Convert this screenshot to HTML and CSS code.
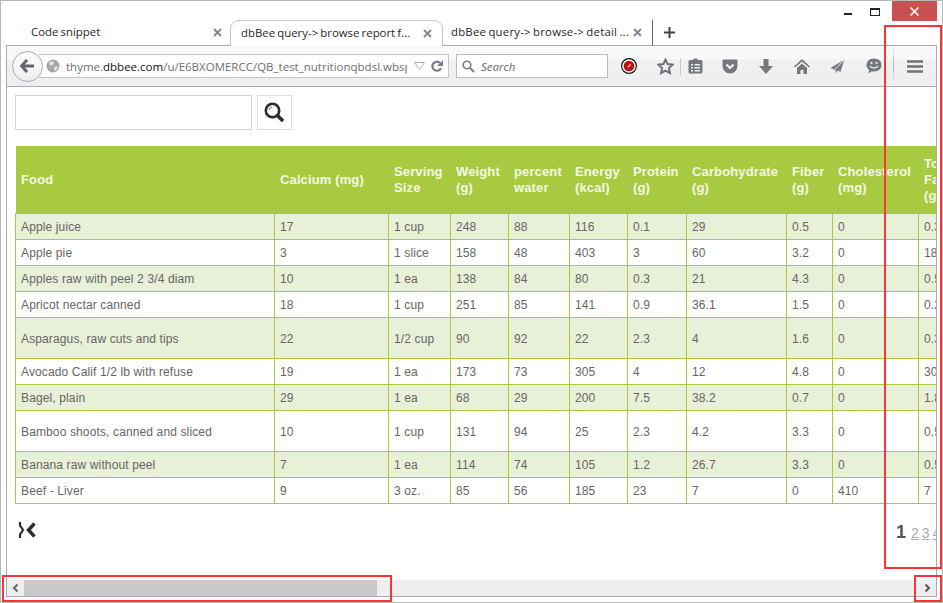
FILE: index.html
```html
<!DOCTYPE html>
<html lang="en">
<head>
<meta charset="utf-8">
<title>dbBee query</title>
<link rel="stylesheet" href="styles.css">
</head>
<body>
<div class="window">
  <div class="caption">
    <span class="cap-min"></span>
    <span class="cap-max"></span>
    <span class="cap-close"><svg width="11" height="11" viewBox="0 0 11 11"><path d="M1.5 1.5l8 8M9.5 1.5l-8 8" stroke="#fff" stroke-width="1.6" fill="none"/></svg></span>
  </div>
  <div class="tabs">
    <div class="tab tab-first"><span class="tab-title">Code snippet</span><svg class="tab-x" width="9" height="9" viewBox="0 0 9 9"><path d="M1 1l7 7M8 1l-7 7" stroke="#7f8a96" stroke-width="2"/></svg></div>
    <div class="tab tab-active"><span class="tab-title">dbBee query-&gt; browse report f...</span><svg class="tab-x" width="9" height="9" viewBox="0 0 9 9"><path d="M1 1l7 7M8 1l-7 7" stroke="#7f8a96" stroke-width="2"/></svg></div>
    <div class="tab tab-third"><span class="tab-title">dbBee query-&gt; browse-&gt; detail ...</span><svg class="tab-x" width="9" height="9" viewBox="0 0 9 9"><path d="M1 1l7 7M8 1l-7 7" stroke="#7f8a96" stroke-width="2"/></svg></div>
    <svg class="tab-plus" width="11" height="11" viewBox="0 0 11 11"><path d="M5.5 0v11M0 5.5h11" stroke="#3f4347" stroke-width="2"/></svg>
  </div>
  <div class="browser">
    <div class="nav">
      <div class="back"><svg width="15" height="14" viewBox="0 0 15 14"><path d="M7 1L1.500 7 7 13M2 7h12" stroke="#62676c" stroke-width="3" fill="none"/></svg></div>
      <div class="url">
        <svg class="globe" width="14" height="14" viewBox="0 0 14 14"><circle cx="7" cy="7" r="6.500" fill="#a3a6a8"/><path d="M3 3l4-1 1 3-3 2-2-2zM8 8l3-1 1 2-3 3-1-2z" fill="#dfe1e2"/></svg>
        <span class="url-text">thyme.<b>dbbee.com</b>/u/E6BXOMERCC/QB_test_nutritionqbdsl.wbsp</span>
        <svg class="url-drop" width="11" height="8" viewBox="0 0 11 8"><path d="M0.500 0.500h10L5.500 7.500z" fill="none" stroke="#a9b0b6"/></svg>
        <svg class="url-reload" width="14" height="14" viewBox="0 0 14 14"><path d="M11 9a4.500 4.500 0 1 1-1-5" stroke="#6f7d8a" stroke-width="2.200" fill="none"/><path d="M13 1v6H7z" fill="#6f7d8a"/></svg>
      </div>
      <div class="search">
        <svg width="13" height="13" viewBox="0 0 13 13"><circle cx="5" cy="5" r="3.800" stroke="#7c7f82" stroke-width="1.600" fill="none"/><path d="M8 8l4 4" stroke="#7c7f82" stroke-width="2"/></svg>
        <span>Search</span>
      </div>
      <svg class="ic ic-rec" width="16" height="16" viewBox="0 0 18 18"><circle cx="9" cy="9" r="8.300" fill="#fff" stroke="#111" stroke-width="1.300"/><circle cx="9" cy="9" r="6" fill="#c40a12"/><path d="M7.500 10.500l3.500-3.500" stroke="#f3a0a0" stroke-width="1.800"/></svg>
      <svg class="ic ic-star" width="17" height="17" viewBox="0 0 17 17"><path d="M8.500 1.500l2.100 4.600 5 .6-3.700 3.400 1 5-4.400-2.500-4.400 2.500 1-5L1.400 6.700l5-.6z" fill="none" stroke="#6c7177" stroke-width="2"/></svg>
      <span class="ic-sep"></span>
      <svg class="ic ic-clip" width="15" height="16" viewBox="0 0 15 16"><path d="M2 2h3.500V0.500h4V2H13a1.500 1.500 0 0 1 1.500 1.500V14a1.500 1.500 0 0 1-1.500 1.500H2A1.500 1.500 0 0 1 .5 14V3.500A1.500 1.500 0 0 1 2 2z" fill="#73787e"/><path d="M3 6h2v1.500H3zM6.500 6H12v1.500H6.500zM3 9h2v1.500H3zM6.500 9H12v1.500H6.500zM3 12h2v1.500H3zM6.500 12H12v1.500H6.500z" fill="#eef0f2"/></svg>
      <svg class="ic ic-pocket" width="16" height="15" viewBox="0 0 16 15"><path d="M1.500 0.500h13a1 1 0 0 1 1 1V7a7.500 7.500 0 0 1-15 0V1.500a1 1 0 0 1 1-1z" fill="#73787e"/><path d="M4.500 5.500L8 9l3.500-3.500" stroke="#f1f2f4" stroke-width="2.200" fill="none"/></svg>
      <svg class="ic ic-down" width="14" height="15" viewBox="0 0 14 15"><path d="M4.500 0h5v7H14l-7 8-7-8h4.500z" fill="#73787e"/></svg>
      <svg class="ic ic-home" width="16" height="15" viewBox="0 0 16 15"><path d="M8 0l8 7.500-1 1L8 2.500 1 8.500 0 7.500z" fill="#73787e"/><path d="M3 9l5-4.500L13 9v6H9.500v-4h-3v4H3z" fill="#73787e"/></svg>
      <svg class="ic ic-send" width="15" height="15" viewBox="0 0 15 15"><path d="M14.500 0.500L0.500 9l4 1.500 1 4 2.500-3 2.500 1.500z" fill="#767b81"/><path d="M14 1L5 10.500l1 3.500" stroke="#e8eaec" stroke-width="1" fill="none"/></svg>
      <svg class="ic ic-smile" width="16" height="16" viewBox="0 0 16 16"><path d="M8 0.500c4.300 0 7.500 2.800 7.500 6.500S12.300 13.500 8 13.500c-.8 0-1.500-.1-2.200-.3L2.500 15.500l.6-3.500C1.500 10.800.5 9 .5 7 .5 3.300 3.700.5 8 .5z" fill="#73787e"/><circle cx="5.500" cy="5" r="1.100" fill="#eef0f2"/><circle cx="10.500" cy="5" r="1.100" fill="#eef0f2"/><path d="M4 8c1.500 2.500 6.500 2.500 8 0" stroke="#eef0f2" stroke-width="1.300" fill="none"/></svg>
      <span class="ic-sep2"></span>
      <svg class="ic ic-menu" width="16" height="13" viewBox="0 0 16 13"><path d="M0 1.500h16M0 6.500h16M0 11.500h16" stroke="#6e7378" stroke-width="2.600"/></svg>
    </div>
    <div class="page">
      <div class="finder">
        <div class="finder-input"></div>
        <div class="finder-btn"><svg width="21" height="21" viewBox="0 0 21 21"><circle cx="8.500" cy="8.500" r="6.700" fill="none" stroke="#2b2b2b" stroke-width="2.600"/><path d="M13.500 13.500l5.500 5.500" stroke="#2b2b2b" stroke-width="3.600"/><path d="M5 8a3.500 3.500 0 0 1 3-3" stroke="#777" stroke-width="1" fill="none"/></svg></div>
      </div>
      <table class="report">
        <colgroup>
          <col class="c-food"><col class="c-cal"><col class="c-serv"><col class="c-wt"><col class="c-pw"><col class="c-en"><col class="c-pr"><col class="c-ca"><col class="c-fi"><col class="c-ch"><col class="c-fa">
        </colgroup>
        <thead>
          <tr><th>Food</th><th>Calcium (mg)</th><th>Serving Size</th><th>Weight (g)</th><th>percent water</th><th>Energy (kcal)</th><th>Protein (g)</th><th>Carbohydrate (g)</th><th>Fiber (g)</th><th>Cholesterol (mg)</th><th>Total Fat (g)</th></tr>
        </thead>
        <tbody>
          <tr><td>Apple juice</td><td>17</td><td>1 cup</td><td>248</td><td>88</td><td>116</td><td>0.1</td><td>29</td><td>0.5</td><td>0</td><td>0.3</td></tr>
          <tr><td>Apple pie</td><td>3</td><td>1 slice</td><td>158</td><td>48</td><td>403</td><td>3</td><td>60</td><td>3.2</td><td>0</td><td>18</td></tr>
          <tr><td>Apples raw with peel 2 3/4 diam</td><td>10</td><td>1 ea</td><td>138</td><td>84</td><td>80</td><td>0.3</td><td>21</td><td>4.3</td><td>0</td><td>0.5</td></tr>
          <tr><td>Apricot nectar canned</td><td>18</td><td>1 cup</td><td>251</td><td>85</td><td>141</td><td>0.9</td><td>36.1</td><td>1.5</td><td>0</td><td>0.2</td></tr>
          <tr class="tall"><td>Asparagus, raw cuts and tips</td><td>22</td><td>1/2 cup</td><td>90</td><td>92</td><td>22</td><td>2.3</td><td>4</td><td>1.6</td><td>0</td><td>0.3</td></tr>
          <tr><td>Avocado Calif 1/2 lb with refuse</td><td>19</td><td>1 ea</td><td>173</td><td>73</td><td>305</td><td>4</td><td>12</td><td>4.8</td><td>0</td><td>30</td></tr>
          <tr><td>Bagel, plain</td><td>29</td><td>1 ea</td><td>68</td><td>29</td><td>200</td><td>7.5</td><td>38.2</td><td>0.7</td><td>0</td><td>1.8</td></tr>
          <tr class="tall"><td>Bamboo shoots, canned and sliced</td><td>10</td><td>1 cup</td><td>131</td><td>94</td><td>25</td><td>2.3</td><td>4.2</td><td>3.3</td><td>0</td><td>0.5</td></tr>
          <tr><td>Banana raw without peel</td><td>7</td><td>1 ea</td><td>114</td><td>74</td><td>105</td><td>1.2</td><td>26.7</td><td>3.3</td><td>0</td><td>0.5</td></tr>
          <tr><td>Beef - Liver</td><td>9</td><td>3 oz.</td><td>85</td><td>56</td><td>185</td><td>23</td><td>7</td><td>0</td><td>410</td><td>7</td></tr>
        </tbody>
      </table>
      <div class="pager">
        <svg class="pager-prev" width="18" height="16" viewBox="0 0 18 16"><path d="M2 0v3.500L5 8 2 12.500V16" stroke="#2e2e2e" stroke-width="2.200" fill="none"/><path d="M16.500 1.500L10.500 8l6 6.500" stroke="#2e2e2e" stroke-width="3.400" fill="none"/></svg>
        <div class="pager-nums"><b>1</b><a>2</a><a>3</a><a>4</a></div>
      </div>
    </div>
    <div class="hscroll">
      <span class="arrow"><svg width="7" height="8" viewBox="0 0 7 8"><path d="M5.500 0.500L2 4l3.500 3.500" stroke="#666" stroke-width="2" fill="none"/></svg></span>
      <span class="thumb"></span>
      <span class="arrow arrow-right"><svg width="7" height="8" viewBox="0 0 7 8"><path d="M1.500 0.500L5 4 1.500 7.500" stroke="#555" stroke-width="2" fill="none"/></svg></span>
    </div>
  </div>
  <div class="mark mark-right"></div>
  <div class="mark mark-scroll"></div>
  <div class="mark mark-arrow"></div>
</div>
</body>
</html>
```
FILE: styles.css
```css
* { box-sizing: border-box; }
html, body { margin: 0; padding: 0; background: #fff; }
body { font-family: "Liberation Sans", Arial, sans-serif; overflow: hidden; }

.window {
  position: relative;
  width: 943px;
  height: 603px;
  padding: 0 6px 5px 6px;
  border: 1px solid #b6b8ba;
  display: flex;
  flex-direction: column;
  background: #fff;
  overflow: hidden;
}

.caption {
  height: 20px;
  display: flex;
  justify-content: flex-end;
  align-items: flex-start;
  margin-right: -1px;
}
.cap-min { width: 8px; height: 2px; background: #222; margin: 12px 18px 0 0; }
.cap-max { width: 10px; height: 8px; border: 1px solid #222; border-top-width: 2px; margin: 7px 12px 0 0; }
.cap-close {
  width: 45px;
  height: 20px;
  background: #c75050;
  display: flex;
  align-items: center;
  justify-content: center;
}

.tabs {
  height: 25px;
  margin-top: -1px;
  display: flex;
  align-items: stretch;
  margin-left: -6px;
  font-family: "Open Sans", "Noto Sans", sans-serif;
  font-size: 11.4px;
  word-spacing: -0.8px;
  color: #1f1f1f;
}
.tab {
  position: relative;
  display: flex;
  align-items: center;
  justify-content: space-between;
  height: 26px;
}
.tab-title { white-space: nowrap; margin-bottom: 3px; }
.tab-x { margin-bottom: 1px; }
.tab-first { width: 229px; padding: 0 8px 0 30px; }
.tab-active {
  width: 213px;
  padding: 0 10px 0 10px;
  background: #fff;
  border: 1px solid #c3c7cb;
  border-bottom: 0;
  border-radius: 9px 9px 0 0;
  margin-bottom: -1px;
  z-index: 2;
}
.tab-third { width: 210px; padding: 0 10px 0 8px; border-right: 1px solid #5c6a7a; letter-spacing: 0.2px; }
.tab-plus { align-self: center; margin-left: 11px; margin-bottom: 1px; }

.browser {
  flex: 1;
  min-height: 0;
  display: flex;
  flex-direction: column;
  border: 1px solid #a8acb2;
  margin-right: -1px;
  margin-left: -1px;
}

.nav {
  height: 41px;
  flex: none;
  display: flex;
  align-items: center;
  padding-left: 5px;
  border-bottom: 1px solid #a9adb3;
  background: linear-gradient(#f8f9fa 0, #f8f9fa 13px, #f0f1f3 14px, #eceef0 100%);
}
.back {
  width: 31px;
  height: 31px;
  flex: none;
  border-radius: 50%;
  border: 1px solid #a9adb1;
  background: linear-gradient(#fff, #eceded);
  display: flex;
  align-items: center;
  justify-content: center;
  position: relative;
  z-index: 2;
}
.url {
  width: 410px;
  height: 24px;
  margin-left: -4px;
  flex: none;
  border: 1px solid #c2c6cb;
  border-left: 0;
  background: #fff;
  display: flex;
  align-items: center;
  padding-left: 7px;
  font-family: "Open Sans", "Noto Sans", sans-serif;
  font-size: 11.5px;
  color: #6f6f6f;
}
.globe { flex: none; }
.url-text { width: 341px; margin-left: 6px; white-space: nowrap; overflow: hidden; }
.url-text b { font-weight: 400; color: #111; }
.url-drop { margin-left: 7px; flex: none; }
.url-reload { margin-left: 5px; flex: none; }
.search {
  width: 152px;
  height: 24px;
  margin-left: 7px;
  flex: none;
  border: 1px solid #b9bdc2;
  background: #fff;
  display: flex;
  align-items: center;
  gap: 6px;
  padding-left: 5px;
  font-family: "Open Sans", "Noto Sans", sans-serif;
  font-style: italic;
  font-size: 11.5px;
  color: #6a6a6a;
}

.ic { flex: none; }
.ic-rec { margin-left: 13px; }
.ic-star { margin-left: 20px; }
.ic-sep { width: 1px; height: 17px; background: #c6c9cc; margin-left: 6px; flex: none; }
.ic-clip { margin-left: 7px; }
.ic-pocket { margin-left: 19px; }
.ic-down { margin-left: 21px; }
.ic-home { margin-left: 21px; }
.ic-send { margin-left: 20px; }
.ic-smile { margin-left: 21px; }
.ic-sep2 { width: 1px; height: 36px; background: linear-gradient(#eef0f1, #b4b8bc 50%, #eef0f1); margin-left: 11px; flex: none; }
.ic-menu { margin-left: 13px; }

.page {
  flex: 1;
  min-height: 0;
  overflow: hidden;
  padding: 8px 0 0 8px;
  background: #fff;
}
.finder { display: flex; gap: 5px; height: 35px; }
.finder-input { width: 237px; height: 35px; border: 1px solid #d6d6d6; background: #fff; }
.finder-btn {
  width: 35px;
  height: 35px;
  border: 1px solid #dedede;
  display: flex;
  align-items: center;
  justify-content: center;
}

.report {
  margin-top: 16px;
  border-collapse: collapse;
  table-layout: fixed;
  width: 950px;
  font-size: 12px;
  letter-spacing: 0.13px;
  color: #666;
}
.c-food { width: 259px; }
.c-cal { width: 114px; }
.c-serv { width: 62px; }
.c-wt { width: 58px; }
.c-pw { width: 61px; }
.c-en { width: 58px; }
.c-pr { width: 59px; }
.c-ca { width: 100px; }
.c-fi { width: 46px; }
.c-ch { width: 86px; }
.c-fa { width: 47px; }

.report th {
  height: 67px;
  background: #a8ca40;
  color: #f4f8e6;
  font-size: 13px;
  line-height: 16px;
  font-weight: 700;
  text-align: left;
  padding: 2px 5px 0 5.5px;
  border: 0;
}
.report td {
  height: 26px;
  padding: 1px 5px 0;
  border: 1px solid #a8ca40;
  white-space: nowrap;
  overflow: hidden;
}
.report tbody tr:nth-child(odd) td { background: #e9f0d8; }
.report tr.tall td { height: 41px; padding-top: 2px; }

.pager {
  display: flex;
  justify-content: space-between;
  align-items: flex-start;
  margin-top: 18px;
  width: 921px;
  overflow: hidden;
}
.pager-prev { margin-left: 3px; }
.pager-nums {
  display: flex;
  align-items: baseline;
  gap: 3px;
  width: 40px;
  flex: none;
  color: #aaa;
  font-size: 14px;
  white-space: nowrap;
  overflow: hidden;
}
.pager-nums b { font-size: 18px; color: #555; margin-right: 2px; }
.pager-nums a { text-decoration: underline; flex: none; }

.hscroll {
  height: 16px;
  flex: none;
  background: #eeeeee;
  display: flex;
  align-items: center;
}
.arrow { width: 17px; flex: none; display: flex; justify-content: center; }
.thumb { width: 353px; height: 16px; background: #c9c9c9; flex: none; }
.arrow-right { margin-left: auto; }

.mark { position: absolute; border: 2px solid #f33; pointer-events: none; z-index: 5; }
.mark-right { left: 883px; top: 24px; width: 58px; height: 544px; }
.mark-scroll { left: 1px; top: 574px; width: 390px; height: 27px; }
.mark-arrow { left: 913px; top: 574px; width: 28px; height: 27px; }
```
